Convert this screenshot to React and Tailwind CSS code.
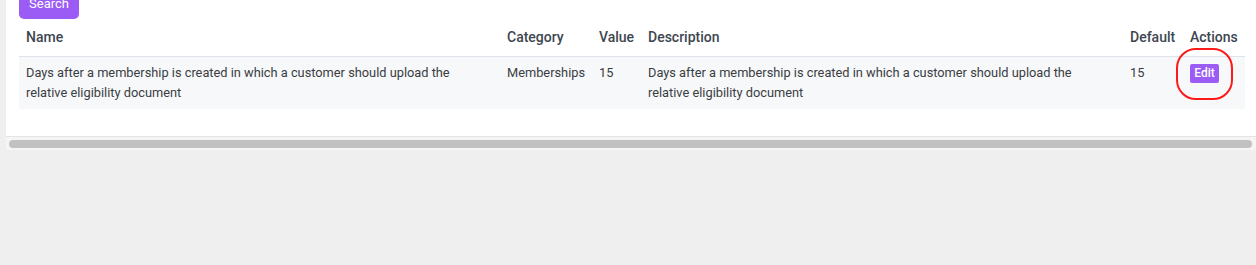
export default function App() {
  const font = { fontFamily: 'Roboto, "Noto Sans", Arial, sans-serif' };
  return (
    <div className="w-[1256px] h-[265px] bg-[#efefef] overflow-hidden" style={font}>
      <div className="ml-[6px] bg-white">
        <div className="pl-[13px] pr-[11px] pb-[27px]">
          <button className="-mt-[11px] h-[30px] w-[60px] rounded-[5px] bg-[#9b5cf6] text-white text-[13px] leading-[30px] block">
            Search
          </button>
          <table className="w-[1226px] table-fixed border-collapse text-left">
            <colgroup>
              <col className="w-[481px]" />
              <col className="w-[92px]" />
              <col className="w-[49px]" />
              <col className="w-[482px]" />
              <col className="w-[60px]" />
              <col className="w-[62px]" />
            </colgroup>
            <thead>
              <tr className="border-b border-[#dde3ea] text-[14px] font-medium text-[#3e4650]">
                <th className="px-[7px] h-[37px] font-medium leading-[20px]">Name</th>
                <th className="px-[7px] font-medium">Category</th>
                <th className="px-[7px] font-medium">Value</th>
                <th className="px-[7px] font-medium">Description</th>
                <th className="px-[7px] font-medium">Default</th>
                <th className="px-[7px] font-medium">Actions</th>
              </tr>
            </thead>
            <tbody>
              <tr className="bg-[#f7f8fa] text-[12.8px] leading-[20px] text-[#3a3d42] align-top">
                <td className="px-[7px] py-[6px]">
                  Days after a membership is created in which a customer should upload the relative eligibility document
                </td>
                <td className="px-[7px] py-[6px]">Memberships</td>
                <td className="px-[7px] py-[6px]">15</td>
                <td className="px-[7px] py-[6px]">
                  Days after a membership is created in which a customer should upload the relative eligibility document
                </td>
                <td className="px-[7px] py-[6px]">15</td>
                <td className="px-[7px] py-[6px]">
                  <div className="relative">
                    <button className="mt-[1px] h-[19px] w-[29px] rounded-[2px] bg-[#9b5cf6] text-white text-[12px] font-medium leading-[19px] block">
                      Edit
                    </button>
                    <div className="absolute -left-[14px] -top-[16px] w-[57px] h-[52px] rounded-[20px] border-[2.5px] border-[#ff1a1a] pointer-events-none" />
                  </div>
                </td>
              </tr>
            </tbody>
          </table>
        </div>
        <div className="h-[14px] bg-[#f5f5f5] border-t border-[#e4e4e4] pt-[3px] pl-[3px] pr-[4px]">
          <div className="h-[8px] rounded-full bg-[#c1c1c1]" />
        </div>
      </div>
    </div>
  );
}
